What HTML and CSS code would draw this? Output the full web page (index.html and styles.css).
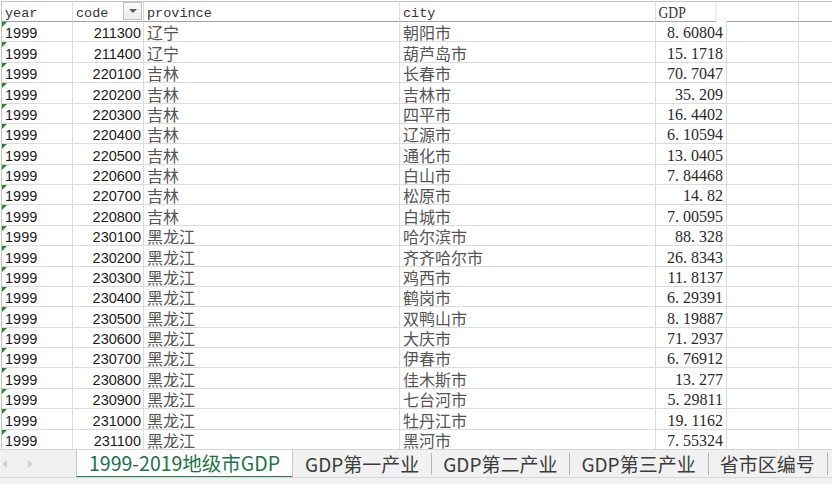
FILE: index.html
```html
<!DOCTYPE html>
<html lang="zh">
<head>
<meta charset="utf-8">
<title>1999-2019地级市GDP</title>
<link rel="stylesheet" href="styles.css">
</head>
<body>
<div class="app">
  <div class="sheet">
    <div class="grid">
      <div class="c hd mono">year</div>
      <div class="c hd mono has-filter">code<span class="filter"><span class="tri"></span></span></div>
      <div class="c hd mono">province</div>
      <div class="c hd mono">city</div>
      <div class="c hd gdph">GDP</div>
      <div class="c hd"></div>
      <div class="c hd"></div>

      <div class="c yr">1999</div><div class="c cd">211300</div><div class="c cj">辽宁</div><div class="c cj">朝阳市</div><div class="c num">8<span class="dot">.</span>60804</div><div class="c"></div><div class="c"></div>
      <div class="c yr">1999</div><div class="c cd">211400</div><div class="c cj">辽宁</div><div class="c cj">葫芦岛市</div><div class="c num">15<span class="dot">.</span>1718</div><div class="c"></div><div class="c"></div>
      <div class="c yr">1999</div><div class="c cd">220100</div><div class="c cj">吉林</div><div class="c cj">长春市</div><div class="c num">70<span class="dot">.</span>7047</div><div class="c"></div><div class="c"></div>
      <div class="c yr">1999</div><div class="c cd">220200</div><div class="c cj">吉林</div><div class="c cj">吉林市</div><div class="c num">35<span class="dot">.</span>209</div><div class="c"></div><div class="c"></div>
      <div class="c yr">1999</div><div class="c cd">220300</div><div class="c cj">吉林</div><div class="c cj">四平市</div><div class="c num">16<span class="dot">.</span>4402</div><div class="c"></div><div class="c"></div>
      <div class="c yr">1999</div><div class="c cd">220400</div><div class="c cj">吉林</div><div class="c cj">辽源市</div><div class="c num">6<span class="dot">.</span>10594</div><div class="c"></div><div class="c"></div>
      <div class="c yr">1999</div><div class="c cd">220500</div><div class="c cj">吉林</div><div class="c cj">通化市</div><div class="c num">13<span class="dot">.</span>0405</div><div class="c"></div><div class="c"></div>
      <div class="c yr">1999</div><div class="c cd">220600</div><div class="c cj">吉林</div><div class="c cj">白山市</div><div class="c num">7<span class="dot">.</span>84468</div><div class="c"></div><div class="c"></div>
      <div class="c yr">1999</div><div class="c cd">220700</div><div class="c cj">吉林</div><div class="c cj">松原市</div><div class="c num">14<span class="dot">.</span>82</div><div class="c"></div><div class="c"></div>
      <div class="c yr">1999</div><div class="c cd">220800</div><div class="c cj">吉林</div><div class="c cj">白城市</div><div class="c num">7<span class="dot">.</span>00595</div><div class="c"></div><div class="c"></div>
      <div class="c yr">1999</div><div class="c cd">230100</div><div class="c cj">黑龙江</div><div class="c cj">哈尔滨市</div><div class="c num">88<span class="dot">.</span>328</div><div class="c"></div><div class="c"></div>
      <div class="c yr">1999</div><div class="c cd">230200</div><div class="c cj">黑龙江</div><div class="c cj">齐齐哈尔市</div><div class="c num">26<span class="dot">.</span>8343</div><div class="c"></div><div class="c"></div>
      <div class="c yr">1999</div><div class="c cd">230300</div><div class="c cj">黑龙江</div><div class="c cj">鸡西市</div><div class="c num">11<span class="dot">.</span>8137</div><div class="c"></div><div class="c"></div>
      <div class="c yr">1999</div><div class="c cd">230400</div><div class="c cj">黑龙江</div><div class="c cj">鹤岗市</div><div class="c num">6<span class="dot">.</span>29391</div><div class="c"></div><div class="c"></div>
      <div class="c yr">1999</div><div class="c cd">230500</div><div class="c cj">黑龙江</div><div class="c cj">双鸭山市</div><div class="c num">8<span class="dot">.</span>19887</div><div class="c"></div><div class="c"></div>
      <div class="c yr">1999</div><div class="c cd">230600</div><div class="c cj">黑龙江</div><div class="c cj">大庆市</div><div class="c num">71<span class="dot">.</span>2937</div><div class="c"></div><div class="c"></div>
      <div class="c yr">1999</div><div class="c cd">230700</div><div class="c cj">黑龙江</div><div class="c cj">伊春市</div><div class="c num">6<span class="dot">.</span>76912</div><div class="c"></div><div class="c"></div>
      <div class="c yr">1999</div><div class="c cd">230800</div><div class="c cj">黑龙江</div><div class="c cj">佳木斯市</div><div class="c num">13<span class="dot">.</span>277</div><div class="c"></div><div class="c"></div>
      <div class="c yr">1999</div><div class="c cd">230900</div><div class="c cj">黑龙江</div><div class="c cj">七台河市</div><div class="c num">5<span class="dot">.</span>29811</div><div class="c"></div><div class="c"></div>
      <div class="c yr">1999</div><div class="c cd">231000</div><div class="c cj">黑龙江</div><div class="c cj">牡丹江市</div><div class="c num">19<span class="dot">.</span>1162</div><div class="c"></div><div class="c"></div>
      <div class="c yr">1999</div><div class="c cd">231100</div><div class="c cj">黑龙江</div><div class="c cj">黑河市</div><div class="c num">7<span class="dot">.</span>55324</div><div class="c"></div><div class="c"></div>
    </div>
  </div>
  <div class="tabbar">
    <div class="nav">
      <span class="arr left"></span>
      <span class="arr right"></span>
    </div>
    <div class="tab active">1999-2019地级市GDP</div>
    <div class="tab">GDP第一产业</div>
    <div class="tab">GDP第二产业</div>
    <div class="tab">GDP第三产业</div>
    <div class="tab">省市区编号</div>
    <div class="tab end"></div>
  </div>
</div>
</body>
</html>
```
FILE: styles.css
```css
html, body {
  margin: 0;
  padding: 0;
  background: #ffffff;
}
body {
  width: 832px;
  height: 484px;
  overflow: hidden;
  font-family: "Liberation Sans", "Noto Sans CJK SC", sans-serif;
  color: #222;
}
.app {
  display: flex;
  flex-direction: column;
  width: 832px;
  height: 484px;
}
.sheet {
  height: 449px;
  overflow: hidden;
  padding: 1px 0 0 1px;
  box-sizing: border-box;
  flex: none;
}
.grid {
  display: grid;
  grid-template-columns: 71px 71px 256px 256px 71px 72px 80px;
  grid-template-rows: 20px repeat(21, 20.38px);
  border-left: 1px solid #c4c4c4;
  border-top: 1px solid #c4c4c4;
}
.c {
  box-sizing: border-box;
  border-right: 1px solid #dcdcdc;
  border-bottom: 1px solid #dcdcdc;
  display: flex;
  align-items: flex-end;
  white-space: nowrap;
  position: relative;
  line-height: 18px;
}
.hd {
  border-bottom-color: #a3a3a3;
}
.mono {
  font-family: "Liberation Mono", monospace;
  font-size: 13.5px;
  color: #333;
  padding-left: 3px;
  line-height: 15px;
}
.gdph {
  font-family: "Liberation Serif", serif;
  font-size: 16px;
  color: #333;
  padding-left: 3px;
  line-height: 17px;
  transform: scaleX(0.85);
  transform-origin: left center;
}
.has-filter {
  padding-left: 3px;
}
.filter {
  position: absolute;
  right: 1px;
  top: 0;
  width: 19px;
  height: 18px;
  box-sizing: border-box;
  border: 1px solid #c2c2c2;
  background: linear-gradient(#fafafa, #ececec);
  display: flex;
  align-items: center;
  justify-content: center;
}
.tri {
  width: 0;
  height: 0;
  border-left: 4px solid transparent;
  border-right: 4px solid transparent;
  border-top: 4px solid #5a5a5a;
}
.yr {
  font-family: "Liberation Sans", sans-serif;
  font-size: 14.5px;
  color: #1a1a1a;
  padding-left: 3px;
  line-height: 15px;
}
.yr::before {
  content: "";
  position: absolute;
  left: 0;
  top: 0;
  width: 0;
  height: 0;
  border-top: 5px solid #1f8b24;
  border-right: 5px solid transparent;
}
.cd {
  font-family: "Liberation Sans", sans-serif;
  font-size: 14.5px;
  color: #1a1a1a;
  justify-content: flex-end;
  padding-right: 2px;
  line-height: 15px;
}
.cj {
  font-family: "Noto Sans CJK SC", sans-serif;
  font-size: 16px;
  color: #555;
  padding-left: 3px;
  line-height: 18px;
}
.num {
  font-family: "Liberation Serif", serif;
  font-size: 16px;
  color: #2a2a2a;
  justify-content: flex-end;
  padding-right: 3px;
  line-height: 16px;
}
.dot {
  letter-spacing: 4px;
}

.tabbar {
  flex: none;
  height: 35px;
  box-sizing: border-box;
  background: #f1f1f1;
  border-top: 1px solid #d6d6d6;
  display: flex;
  align-items: flex-start;
  font-family: "Noto Sans CJK SC", sans-serif;
  font-size: 19px;
  position: relative;
}
.tabbar::after {
  content: "";
  position: absolute;
  left: 0;
  right: 0;
  bottom: 6px;
  border-top: 1px solid #d8d8d8;
}
.nav {
  width: 76px;
  height: 27px;
  flex: none;
  display: flex;
  align-items: center;
  gap: 21px;
  padding-left: 2px;
  box-sizing: border-box;
}
.arr {
  width: 0;
  height: 0;
  border-top: 4px solid transparent;
  border-bottom: 4px solid transparent;
}
.arr.left {
  border-right: 5px solid #cfcfcf;
}
.arr.right {
  border-left: 5px solid #cfcfcf;
}
.tab {
  flex: none;
  height: 22px;
  margin-top: 3px;
  padding: 0 12px;
  line-height: 22px;
  color: #3c3c3c;
  position: relative;
  white-space: nowrap;
}
.tab + .tab::before {
  content: "";
  position: absolute;
  left: 0;
  top: 0;
  bottom: 0;
  border-left: 1px solid #b4b4b4;
}
.tab.active + .tab::before {
  display: none;
}
.tab.active {
  margin-top: 0;
  height: 28px;
  line-height: 26px;
  padding: 0 12px;
  font-size: 19.5px;
  background: #ffffff;
  color: #217346;
  border-left: 1px solid #c8c8c8;
  border-right: 1px solid #c8c8c8;
  border-bottom: 2px solid #2e7d4f;
  box-sizing: border-box;
}
```
